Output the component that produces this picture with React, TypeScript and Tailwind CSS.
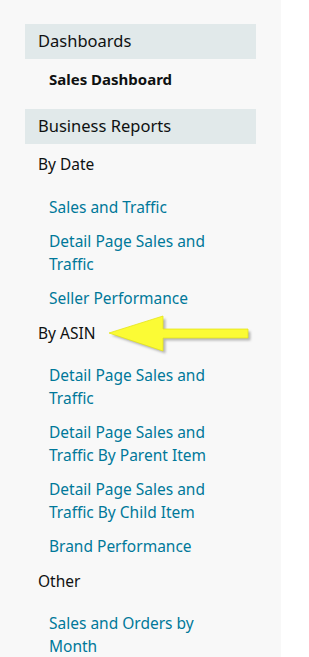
import { Fragment } from "react";

type Group = { title: string; links: string[] };

const groups: Group[] = [
  {
    title: "By Date",
    links: ["Sales and Traffic", "Detail Page Sales and Traffic", "Seller Performance"],
  },
  {
    title: "By ASIN",
    links: [
      "Detail Page Sales and Traffic",
      "Detail Page Sales and Traffic By Parent Item",
      "Detail Page Sales and Traffic By Child Item",
      "Brand Performance",
    ],
  },
  {
    title: "Other",
    links: ["Sales and Orders by Month"],
  },
];

function SectionHeader({ label }: { label: string }) {
  return (
    <div className="flex h-[35px] items-center bg-[#e1e9ea] px-[13px] pb-[3px] text-[16.5px] text-[#0f1111]">
      {label}
    </div>
  );
}

// yellow annotation arrow pointing at "By ASIN"
function Arrow() {
  const pts = "9,28 63,11 63,24 148,24 148,33 63,33 63,46";
  return (
    <svg
      className="pointer-events-none absolute left-[100px] top-[305px]"
      width="160"
      height="60"
      viewBox="0 0 160 60"
    >
      <defs>
        <filter id="arrow-shadow" x="-10%" y="-20%" width="130%" height="160%">
          <feGaussianBlur stdDeviation="1.2" />
        </filter>
      </defs>
      <polygon points={pts} fill="#8a8a8a" opacity="0.6" transform="translate(2.5 2.5)" filter="url(#arrow-shadow)" />
      <polygon points={pts} fill="#fbfb35" stroke="#e4e41c" strokeWidth="0.8" strokeLinejoin="miter" />
    </svg>
  );
}

export default function App() {
  return (
    <div className="relative h-screen w-full overflow-hidden bg-white font-['Noto_Sans',sans-serif]">
      <nav className="h-full w-[281px] bg-[#f8f8f8] px-[25px] pt-6 leading-[23px]">
        <SectionHeader label="Dashboards" />
        <div className="mb-[18px] mt-[9px] pl-6 text-[15px] font-bold text-[#0f1111]">Sales Dashboard</div>

        <SectionHeader label="Business Reports" />
        <div className="mt-[9px] flex flex-col">
          {groups.map((g, i) => (
            <Fragment key={g.title}>
              <div className={`${i > 0 ? "mt-3" : ""} pl-[13px] text-[15.5px] text-[#0f1111]`}>{g.title}</div>
              <ul className={`${i > 0 ? "mt-[19px]" : "mt-5"} flex flex-col gap-[11px] pl-6 pr-[30px]`}>
                {g.links.map((l) => (
                  <li key={l} className="text-[15.5px] text-[#00789a]">
                    {l}
                  </li>
                ))}
              </ul>
            </Fragment>
          ))}
        </div>
      </nav>
      <Arrow />
    </div>
  );
}
